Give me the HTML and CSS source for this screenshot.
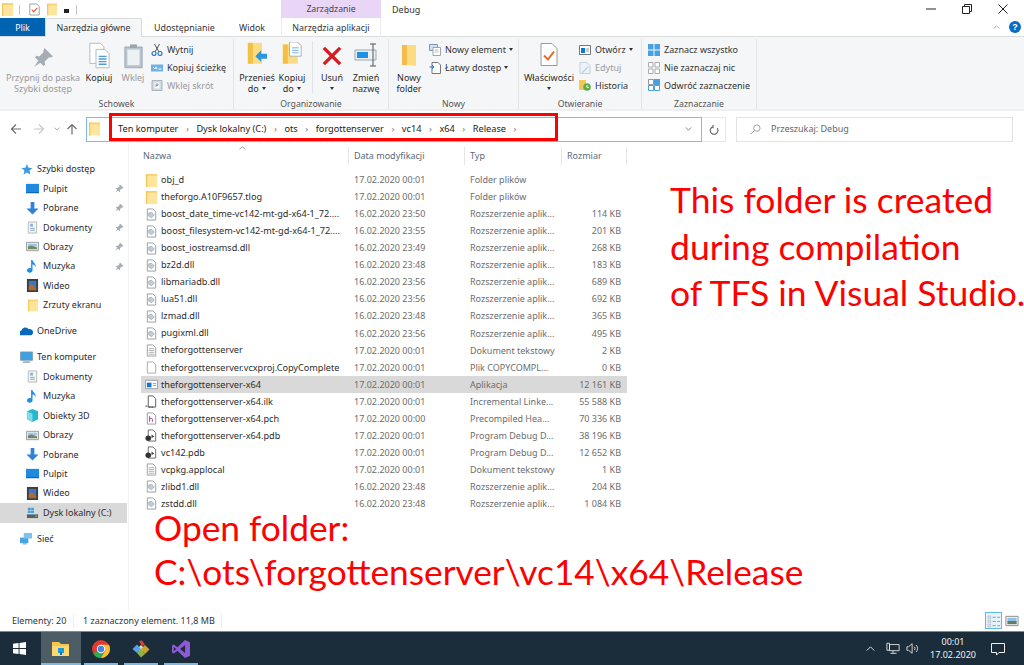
FILE: index.html
```html
<!DOCTYPE html>
<html lang="pl">
<head>
<meta charset="utf-8">
<title>Debug</title>
<link rel="stylesheet" href="styles.css">
</head>
<body>
<svg class="defs" width="0" height="0">
  <symbol id="folder" viewBox="0 0 12 14"><path d="M0 0h12v14H0z" fill="#fde59e"/><path d="M0 0h12v2H0z" fill="#f8d272"/><path d="M0 0h1.500v14H0z" fill="#f3c65e"/></symbol>
  <symbol id="dll" viewBox="0 0 14 14"><path d="M2.500 1h6L11.500 4v9h-9z" fill="#fff" stroke="#9a9a9a"/><path d="M4 5.500l3-1 3 3-3 3-3-2z" fill="#c4ccd4" stroke="#8793a0" stroke-width=".6"/></symbol>
  <symbol id="txt" viewBox="0 0 14 14"><path d="M2.500 1h6L11.500 4v9h-9z" fill="#fff" stroke="#9a9a9a"/><path d="M4 5h6M4 7h6M4 9h6M4 11h6" stroke="#9a9a9a" stroke-width=".8"/></symbol>
  <symbol id="blank" viewBox="0 0 14 14"><path d="M2.500 1h6L11.500 4v9h-9z" fill="#fff" stroke="#a8a8a8"/></symbol>
  <symbol id="app" viewBox="0 0 14 14"><path d="M.5 2.500h13v9H.5z" fill="#fff" stroke="#9a9a9a"/><path d="M2 5h5v5H2z" fill="#0a78d7"/><path d="M8.500 6h3.500M8.500 8h3.500" stroke="#999"/></symbol>
  <symbol id="ilk" viewBox="0 0 14 14"><path d="M3.500 1h5L11.500 4v9h-8z" fill="#fff" stroke="#555"/><path d="M.5 12h2M4 13h2M7 13h2" stroke="#333"/></symbol>
  <symbol id="pch" viewBox="0 0 14 14"><path d="M2.500 1h6L11.500 4v9h-9z" fill="#fff" stroke="#9a9a9a"/><path d="M5 4.500v6M5 7.500c1-1 3-1 3 .5v2.500" fill="none" stroke="#a0309a"/></symbol>
  <symbol id="pdb" viewBox="0 0 14 14"><path d="M3.500 1h5L11.500 4v9h-8z" fill="#fff" stroke="#666"/><circle cx="3.500" cy="10" r="3" fill="#333"/><path d="M7 6l3 2-3 2z" fill="#444"/></symbol>
  <symbol id="star" viewBox="0 0 14 14"><path d="M7.500 1l1.700 4 4.300.3-3.300 2.900 1 4.300-3.700-2.300L3.800 12.500l1-4.300L1.500 5.300l4.300-.3z" fill="#3f9ae0"/></symbol>
  <symbol id="desk" viewBox="0 0 14 14"><path d="M0 2h14v10H0z" fill="#1f8be0"/><path d="M0 11h14v1H0z" fill="#0f5fa8"/></symbol>
  <symbol id="down" viewBox="0 0 14 14"><path d="M5 0h4v7h4.500L7 13.500.5 7H5z" fill="#2f82d8"/></symbol>
  <symbol id="doc" viewBox="0 0 14 14"><path d="M2.500 1h9v12h-9z" fill="#f4f5f6" stroke="#b5b5b5"/><path d="M4.500 3h3v3h-3z" fill="#79b6e8"/><path d="M4.500 8h5M4.500 10h5" stroke="#8aa6bd"/></symbol>
  <symbol id="pic" viewBox="0 0 14 14"><path d="M.5 2.500h13v9H.5z" fill="#eee" stroke="#999"/><path d="M2 4h10v3H2z" fill="#9cc8ea"/><path d="M2 7l4-1 6 2v2H2z" fill="#6f8a62"/></symbol>
  <symbol id="music" viewBox="0 0 14 14"><path d="M5.500 0h1.500c.5 3 4 3.500 3.500 8C10 5.500 8.500 5 7 4.500V11a3 2.500 0 1 1-1.500-2z" fill="#1d8fe6"/></symbol>
  <symbol id="video" viewBox="0 0 14 14"><path d="M1 0h12v14H1z" fill="#3d3d3d"/><path d="M3 2h8v10H3z" fill="#3976c6"/><path d="M3 8l3-3 5 5v2H3z" fill="#b56a2c"/></symbol>
  <symbol id="cube" viewBox="0 0 14 14"><path d="M7 0l6 2.500V11l-6 3-6-3V2.500z" fill="#27b6cf"/><path d="M1 2.500L7 5v9l-6-3z" fill="#7fdbe6"/></symbol>
  <symbol id="cloud" viewBox="0 0 14 14"><path d="M0 11a3 3 0 0 1 1.500-5A4.500 4.500 0 0 1 9.500 4.500 3.500 3.500 0 0 1 14 8c0 1.500-1 3-2.500 3z" fill="#0a68bd"/></symbol>
  <symbol id="pc" viewBox="0 0 14 14"><path d="M.5 1h13v9H.5z" fill="#3aa3e3" stroke="#7d94a6" stroke-width=".8"/><path d="M3 12h8" stroke="#8fa3b3" stroke-width="1.500"/><path d="M6 10h2v2H6z" fill="#aab8c2"/></symbol>
  <symbol id="drive" viewBox="0 0 14 14"><path d="M1 9h12v4H1z" fill="#555f66"/><path d="M10 10.500h2v1h-2z" fill="#9ee06a"/><path d="M2 2h3v2.500H2zM5.500 2h3v2.500h-3zM2 5h3v2.500H2zM5.500 5h3v2.500h-3z" fill="#36a2e8"/></symbol>
  <symbol id="net" viewBox="0 0 14 14"><path d="M0 6h9v6H0z" fill="#48a3e0"/><path d="M4 1h9v6H4z" fill="#7cc3ee"/><path d="M3 12h4v1.500H3z" fill="#9ab"/></symbol>
  <symbol id="pin" viewBox="0 0 10 10"><path d="M5.500.5L9.500 4.500 8.500 5 7.500 5 5.500 7l.3 1.500-.8.500L1 5l.5-.8L3 4.500 5 2.500 5 1.500zM2.500 6.500L.5 9.500l3-2z" fill="#a5adb4"/></symbol>
  <symbol id="copybig" viewBox="0 0 24 30"><path d="M1 1h12l4 4v19H1z" fill="#fff" stroke="#a9b4bd"/><path d="M8 8h10l5 5v16H8z" fill="#fff" stroke="#a9b4bd"/><path d="M11 16h9M11 19h9M11 22h9M11 25h9" stroke="#4a9be0" stroke-width="1.500"/></symbol>
  <symbol id="clip" viewBox="0 0 22 28"><path d="M1 3h20v24H1z" fill="#b9c6d2" stroke="#94a1ad"/><path d="M4 6h14v18H4z" fill="#eef1f4"/><path d="M7 0h8v4H7z" fill="#9aa5af"/></symbol>
  <symbol id="qatcheck" viewBox="0 0 14 16"><path d="M1 1h9l3 3v11H1z" fill="#fff" stroke="#8a8a8a"/><path d="M3.500 8l2.500 3 4.500-5" fill="none" stroke="#dd5a2c" stroke-width="1.400"/></symbol>
</svg>

<header class="titlebar">
  <div class="qat">
    <svg class="q1"><use href="#folder"/></svg><i class="qsep"></i>
    <svg class="q2"><use href="#qatcheck"/></svg>
    <svg class="q3"><use href="#folder"/></svg>
    <span class="qdrop"></span><i class="qsep"></i>
  </div>
  <div class="ctx-head">Zarządzanie</div>
  <div class="wintitle">Debug</div>
  <div class="winbtns">
    <svg class="wb" viewBox="0 0 10 10"><path d="M0 5h10" stroke="#222"/></svg>
    <svg class="wb" viewBox="0 0 10 10"><path d="M.5 2.500h7v7h-7zM2.500 2.500V.5h7v7h-2" fill="none" stroke="#222"/></svg>
    <svg class="wb" viewBox="0 0 10 10"><path d="M.5.500l9 9M9.500.500l-9 9" stroke="#222"/></svg>
  </div>
</header>

<nav class="tabs">
  <div class="tab tab-file">Plik</div>
  <div class="tab tab-home">Narzędzia główne</div>
  <div class="tab tab-share">Udostępnianie</div>
  <div class="tab tab-view">Widok</div>
  <div class="tab tab-ctx">Narzędzia aplikacji</div>
  <div class="tab-tools">
    <svg class="fold-ribbon" viewBox="0 0 8 5"><path d="M.5 4.500L4 1l3.500 3.500" fill="none" stroke="#9a9a9a"/></svg>
    <div class="helpdot">?</div>
  </div>
</nav>

<section class="ribbon">
  <div class="group g-clip">
    <div class="group-body">
      <div class="big w-pin off">
        <svg class="ic-pin" viewBox="0 0 10 10"><use href="#pin"/></svg>
        <span>Przypnij do paska<br>Szybki dostęp</span>
      </div>
      <div class="big w-copy"><svg class="ic-copy"><use href="#copybig"/></svg><span>Kopiuj</span></div>
      <div class="big w-paste off"><svg class="ic-clip"><use href="#clip"/></svg><span>Wklej</span></div>
      <div class="smalls s-clip">
        <div class="small"><svg class="ic-s" viewBox="0 0 12 12"><path d="M3.500 0l4.500 8M8.500 0L4 8" stroke="#555" fill="none"/><circle cx="3" cy="9.500" r="2" fill="none" stroke="#2878c8" stroke-width="1.200"/><circle cx="9" cy="9.500" r="2" fill="none" stroke="#2878c8" stroke-width="1.200"/></svg>Wytnij</div>
        <div class="small"><svg class="ic-s" viewBox="0 0 12 12"><path d="M0 2.500h12v7H0z" fill="#6cb2e8"/><path d="M2 5l2 2 1-2 1 2M7.500 7h3" stroke="#fff" fill="none"/></svg>Kopiuj ścieżkę</div>
        <div class="small off"><svg class="ic-s" viewBox="0 0 12 12"><path d="M1 1.500h10v10H1z" fill="#c8d2db" stroke="#9aa5af"/><path d="M3.500 3.500h5v6h-5z" fill="#fff"/><path d="M5 5v3M5 5h2v1.500H5" stroke="#7a8a98" fill="none"/></svg>Wklej skrót</div>
      </div>
    </div>
    <div class="group-label">Schowek</div>
  </div>

  <div class="group g-org">
    <div class="group-body">
      <div class="big w-move">
        <svg class="ic-org" viewBox="0 0 24 30"><path d="M1 1h17v25H1z" fill="#fcdc82"/><path d="M1 1h6v25H1z" fill="#f5bf45"/><path d="M10 17l7-7v4h7v6h-7v4z" fill="#2f95e0"/></svg>
        <span>Przenieś<br>do <b class="caret"></b></span>
      </div>
      <div class="big w-copy2">
        <svg class="ic-org" viewBox="0 0 24 30"><path d="M1 3h18v23H1z" fill="#fcdc82"/><path d="M1 3h6v23H1z" fill="#f5bf45"/><path d="M9 0h9l5 4v13H9z" fill="#fff" stroke="#9aa7b2"/><path d="M12 7h8M12 10h8M12 13h8" stroke="#5ea4e0"/></svg>
        <span>Kopiuj<br>do <b class="caret"></b></span>
      </div>
      <i class="vsep"></i>
      <div class="big w-del">
        <svg class="ic-del" viewBox="0 0 22 22"><path d="M2 2l18 18M20 2L2 20" stroke="#d8191f" stroke-width="3.600"/></svg>
        <span>Usuń<br><b class="caret"></b></span>
      </div>
      <div class="big w-ren">
        <svg class="ic-ren" viewBox="0 0 24 24"><path d="M1 7h21v10H1z" fill="#eef1f3" stroke="#9aa7b2"/><path d="M3 9h11v6H3z" fill="#1e90e6"/><path d="M16 1h6M16 23h6M19 1v22" stroke="#555" fill="none"/></svg>
        <span>Zmień<br>nazwę</span>
      </div>
    </div>
    <div class="group-label">Organizowanie</div>
  </div>

  <div class="group g-new">
    <div class="group-body">
      <div class="big w-newf">
        <svg class="ic-newf" viewBox="0 0 16 24"><path d="M1 1h14v21l-8-1H1z" fill="#fcdc82"/><path d="M1 1h5v20H1z" fill="#f2bd4c"/></svg>
        <span>Nowy<br>folder</span>
      </div>
      <div class="smalls s-new">
        <div class="small"><svg class="ic-s" viewBox="0 0 12 12"><path d="M.5.500h8v6h-8z" fill="#cfe3f4" stroke="#7c99b2"/><path d="M4 3.500h7.500v8H4z" fill="#fff" stroke="#99a4ad"/><path d="M5.500 6h4M5.500 8h4" stroke="#bbb"/></svg>Nowy element <b class="caret"></b></div>
        <div class="small"><svg class="ic-s" viewBox="0 0 12 12"><path d="M3 .500h6l2.500 2.500v8.500H3z" fill="#fff" stroke="#777"/><path d="M.500 5h4M3 3l2 2-2 2" stroke="#2878c8" fill="none"/></svg>Łatwy dostęp <b class="caret"></b></div>
      </div>
    </div>
    <div class="group-label">Nowy</div>
  </div>

  <div class="group g-open">
    <div class="group-body">
      <div class="big w-prop">
        <svg class="ic-prop" viewBox="0 0 18 24"><path d="M1 1h11l5 5v17H1z" fill="#fff" stroke="#9a9a9a"/><path d="M4 13l4 4 6-8" fill="none" stroke="#e8672d" stroke-width="2"/></svg>
        <span>Właściwości<br><b class="caret"></b></span>
      </div>
      <div class="smalls s-open">
        <div class="small"><svg class="ic-s" viewBox="0 0 12 12"><path d="M.5 1.500h11v9H.5z" fill="#fff" stroke="#777"/><path d="M2 4h4v5H2z" fill="#0a78d7"/><path d="M7 5h3M7 7h3" stroke="#999"/></svg>Otwórz <b class="caret"></b></div>
        <div class="small off"><svg class="ic-s" viewBox="0 0 12 12"><path d="M1 .500h7l3 3v8H1z" fill="#eef3f8" stroke="#b8c8d8"/><path d="M3 10l6-6 1 1-6 6H3z" fill="#a8cbe8"/></svg>Edytuj</div>
        <div class="small"><svg class="ic-s" viewBox="0 0 12 12"><path d="M0 1h7v10H0z" fill="#f5c84f"/><circle cx="8" cy="8" r="3.800" fill="#5cae4a"/><path d="M8 6v2.500h2" stroke="#fff" fill="none"/></svg>Historia</div>
      </div>
    </div>
    <div class="group-label">Otwieranie</div>
  </div>

  <div class="group g-sel">
    <div class="group-body">
      <div class="smalls s-sel">
        <div class="small"><svg class="ic-s" viewBox="0 0 12 12"><path d="M0 0h5.500v5.500H0zM6.500 0H12v5.500H6.500zM0 6.500h5.500V12H0zM6.500 6.500H12V12H6.500z" fill="#4ba0e4"/></svg>Zaznacz wszystko</div>
        <div class="small"><svg class="ic-s" viewBox="0 0 12 12"><path d="M.5.500h4.500v4.500H.5zM7 .500h4.500v4.500H7zM.5 7h4.500v4.500H.5zM7 7h4.500v4.500H7z" fill="#fff" stroke="#aaa"/></svg>Nie zaznaczaj nic</div>
        <div class="small"><svg class="ic-s" viewBox="0 0 12 12"><path d="M.5 6.500h5v5h-5zM6.500 6.500h5v5h-5z" fill="#fff" stroke="#4ba0e4"/><path d="M.5.500h5v5h-5z" fill="#fff" stroke="#999"/><path d="M6 0h6v6H6z" fill="#4ba0e4"/></svg>Odwróć zaznaczenie</div>
      </div>
    </div>
    <div class="group-label">Zaznaczanie</div>
  </div>
  <div class="group-rest"></div>
</section>

<section class="addrbar">
  <svg class="nav back" viewBox="0 0 12 12"><path d="M11 6H1.500M6 1.500L1.500 6 6 10.500" fill="none" stroke="#6c6c6c" stroke-width="1.200"/></svg>
  <svg class="nav fwd" viewBox="0 0 12 12"><path d="M1 6h9.500M6 1.500L10.500 6 6 10.500" fill="none" stroke="#c8c8c8" stroke-width="1.200"/></svg>
  <svg class="nav mini" viewBox="0 0 8 5"><path d="M.5.500L4 4 7.500.500" fill="none" stroke="#8a8a8a"/></svg>
  <svg class="nav up" viewBox="0 0 12 12"><path d="M6 11.500V1.500M1.500 6L6 1.500 10.500 6" fill="none" stroke="#6c6c6c" stroke-width="1.200"/></svg>
  <div class="addr">
    <svg class="addr-ic"><use href="#folder"/></svg>
    <div class="crumbs">
      <span>Ten komputer</span><em>›</em><span>Dysk lokalny (C:)</span><em>›</em><span>ots</span><em>›</em><span>forgottenserver</span><em>›</em><span>vc14</span><em>›</em><span>x64</span><em>›</em><span>Release</span><em>›</em>
    </div>
    <svg class="addr-dd" viewBox="0 0 8 5"><path d="M.5.500L4 4 7.500.500" fill="none" stroke="#666"/></svg>
  </div>
  <div class="refresh"><svg viewBox="0 0 12 12"><path d="M9.500 3.500A4.200 4.200 0 1 1 5 2M5 0v3.500" fill="none" stroke="#666" stroke-width="1.200" transform="translate(.5 1)"/></svg></div>
  <div class="search">
    <svg viewBox="0 0 12 12"><circle cx="7.500" cy="4.500" r="3.500" fill="none" stroke="#999"/><path d="M5 7l-4 4" stroke="#999"/></svg>
    <span>Przeszukaj: Debug</span>
  </div>
</section>

<main class="main">
  <aside class="side">
    <div class="sgroup">
      <div class="si top"><svg><use href="#star"/></svg>Szybki dostęp</div>
      <div class="si"><svg><use href="#desk"/></svg>Pulpit<svg class="spin"><use href="#pin"/></svg></div>
      <div class="si"><svg><use href="#down"/></svg>Pobrane<svg class="spin"><use href="#pin"/></svg></div>
      <div class="si"><svg><use href="#doc"/></svg>Dokumenty<svg class="spin"><use href="#pin"/></svg></div>
      <div class="si"><svg><use href="#pic"/></svg>Obrazy<svg class="spin"><use href="#pin"/></svg></div>
      <div class="si"><svg><use href="#music"/></svg>Muzyka<svg class="spin"><use href="#pin"/></svg></div>
      <div class="si"><svg><use href="#video"/></svg>Wideo</div>
      <div class="si"><svg class="si-folder"><use href="#folder"/></svg>Zrzuty ekranu</div>
    </div>
    <div class="sgroup">
      <div class="si top"><svg><use href="#cloud"/></svg>OneDrive</div>
    </div>
    <div class="sgroup">
      <div class="si top"><svg><use href="#pc"/></svg>Ten komputer</div>
      <div class="si"><svg><use href="#doc"/></svg>Dokumenty</div>
      <div class="si"><svg><use href="#music"/></svg>Muzyka</div>
      <div class="si"><svg><use href="#cube"/></svg>Obiekty 3D</div>
      <div class="si"><svg><use href="#pic"/></svg>Obrazy</div>
      <div class="si"><svg><use href="#down"/></svg>Pobrane</div>
      <div class="si"><svg><use href="#desk"/></svg>Pulpit</div>
      <div class="si"><svg><use href="#video"/></svg>Wideo</div>
      <div class="si sel"><svg><use href="#drive"/></svg>Dysk lokalny (C:)</div>
    </div>
    <div class="sgroup">
      <div class="si top"><svg><use href="#net"/></svg>Sieć</div>
    </div>
  </aside>

  <div class="files">
    <div class="fhead">
      <div>Nazwa</div><div>Data modyfikacji</div><div>Typ</div><div>Rozmiar</div>
    </div>
    <svg class="sortmark" viewBox="0 0 8 4"><path d="M.5 3.500L4 .500l3.500 3" fill="none" stroke="#999"/></svg>
    <div class="frow"><div class="fn"><svg><use href="#folder"/></svg>obj_d</div><div>17.02.2020 00:01</div><div>Folder plików</div><div class="sz"></div></div>
    <div class="frow"><div class="fn"><svg><use href="#folder"/></svg>theforgo.A10F9657.tlog</div><div>17.02.2020 00:01</div><div>Folder plików</div><div class="sz"></div></div>
    <div class="frow"><div class="fn"><svg><use href="#dll"/></svg>boost_date_time-vc142-mt-gd-x64-1_72....</div><div>16.02.2020 23:50</div><div>Rozszerzenie aplik...</div><div class="sz">114 KB</div></div>
    <div class="frow"><div class="fn"><svg><use href="#dll"/></svg>boost_filesystem-vc142-mt-gd-x64-1_72....</div><div>16.02.2020 23:55</div><div>Rozszerzenie aplik...</div><div class="sz">201 KB</div></div>
    <div class="frow"><div class="fn"><svg><use href="#dll"/></svg>boost_iostreamsd.dll</div><div>16.02.2020 23:49</div><div>Rozszerzenie aplik...</div><div class="sz">268 KB</div></div>
    <div class="frow"><div class="fn"><svg><use href="#dll"/></svg>bz2d.dll</div><div>16.02.2020 23:48</div><div>Rozszerzenie aplik...</div><div class="sz">183 KB</div></div>
    <div class="frow"><div class="fn"><svg><use href="#dll"/></svg>libmariadb.dll</div><div>16.02.2020 23:56</div><div>Rozszerzenie aplik...</div><div class="sz">689 KB</div></div>
    <div class="frow"><div class="fn"><svg><use href="#dll"/></svg>lua51.dll</div><div>16.02.2020 23:56</div><div>Rozszerzenie aplik...</div><div class="sz">692 KB</div></div>
    <div class="frow"><div class="fn"><svg><use href="#dll"/></svg>lzmad.dll</div><div>16.02.2020 23:48</div><div>Rozszerzenie aplik...</div><div class="sz">365 KB</div></div>
    <div class="frow"><div class="fn"><svg><use href="#dll"/></svg>pugixml.dll</div><div>16.02.2020 23:56</div><div>Rozszerzenie aplik...</div><div class="sz">495 KB</div></div>
    <div class="frow"><div class="fn"><svg><use href="#txt"/></svg>theforgottenserver</div><div>17.02.2020 00:01</div><div>Dokument tekstowy</div><div class="sz">2 KB</div></div>
    <div class="frow"><div class="fn"><svg><use href="#blank"/></svg>theforgottenserver.vcxproj.CopyComplete</div><div>17.02.2020 00:01</div><div>Plik COPYCOMPL...</div><div class="sz">0 KB</div></div>
    <div class="frow selected"><div class="fn"><svg><use href="#app"/></svg>theforgottenserver-x64</div><div>17.02.2020 00:01</div><div>Aplikacja</div><div class="sz">12 161 KB</div></div>
    <div class="frow"><div class="fn"><svg><use href="#ilk"/></svg>theforgottenserver-x64.ilk</div><div>17.02.2020 00:01</div><div>Incremental Linke...</div><div class="sz">55 588 KB</div></div>
    <div class="frow"><div class="fn"><svg><use href="#pch"/></svg>theforgottenserver-x64.pch</div><div>17.02.2020 00:00</div><div>Precompiled Hea...</div><div class="sz">70 336 KB</div></div>
    <div class="frow"><div class="fn"><svg><use href="#pdb"/></svg>theforgottenserver-x64.pdb</div><div>17.02.2020 00:01</div><div>Program Debug D...</div><div class="sz">38 196 KB</div></div>
    <div class="frow"><div class="fn"><svg><use href="#pdb"/></svg>vc142.pdb</div><div>17.02.2020 00:01</div><div>Program Debug D...</div><div class="sz">12 652 KB</div></div>
    <div class="frow"><div class="fn"><svg><use href="#txt"/></svg>vcpkg.applocal</div><div>17.02.2020 00:01</div><div>Dokument tekstowy</div><div class="sz">1 KB</div></div>
    <div class="frow"><div class="fn"><svg><use href="#dll"/></svg>zlibd1.dll</div><div>16.02.2020 23:48</div><div>Rozszerzenie aplik...</div><div class="sz">204 KB</div></div>
    <div class="frow"><div class="fn"><svg><use href="#dll"/></svg>zstdd.dll</div><div>16.02.2020 23:48</div><div>Rozszerzenie aplik...</div><div class="sz">1 084 KB</div></div>
  </div>
</main>

<footer class="status">
  <span class="st1">Elementy: 20</span>
  <span class="st2">1 zaznaczony element. 11,8 MB</span>
  <div class="views">
    <div class="vbtn on"><svg viewBox="0 0 15 15"><path d="M1 2h3v3H1zM1 6.500h3v3H1zM1 11h3v3H1z" fill="#d7e3ec" stroke="#aab"  stroke-width=".5"/><path d="M6 3.500h3.500M11 3.500h3M6 8h3.500M11 8h3M6 12.500h3.500M11 12.500h3" stroke="#8b97a1"/></svg></div>
    <div class="vbtn"><svg viewBox="0 0 15 15"><path d="M1 2.500h13v10H1z" fill="#fff" stroke="#888"/><path d="M2.500 4h10v3.500h-10z" fill="#8fc2e8"/><path d="M2.500 7.500h10v3.500h-10z" fill="#5f8060"/></svg></div>
  </div>
</footer>

<footer class="taskbar">
  <div class="tb tb-start"><svg viewBox="0 0 14 14"><path d="M0 2l6-.9V6.500H0zM7 1l7-1v6.500H7zM0 7.500h6v5.400l-6-.9zM7 7.500h7V14l-7-1z" fill="#fff"/></svg></div>
  <div class="tb tb-open active"><svg viewBox="0 0 18 16"><path d="M0 1h7l2 2h8v12H0z" fill="#f6c54c"/><path d="M0 5h17v10H0z" fill="#fbd96f"/><path d="M6 7h6v5H6z" fill="#1d9be0"/><path d="M8 11h2v3H8z" fill="#0f6fb0"/></svg></div>
  <div class="tb tb-open"><svg viewBox="0 0 18 18"><circle cx="9" cy="9" r="9" fill="#e33b2e"/><path d="M9 9L1.200 13.500A9 9 0 0 0 9 18c1 0 2-.2 3-.5z" fill="#2da94f"/><path d="M9 4.800h7.900A9 9 0 0 1 9 18l4-7z" fill="#fbc02d"/><circle cx="9" cy="9" r="4.200" fill="#fff"/><circle cx="9" cy="9" r="3.200" fill="#3f87e8"/></svg></div>
  <div class="tb tb-open"><svg viewBox="0 0 18 18"><path d="M5 9l4-4 4 4-4 4z" fill="#e9e0b0"/><path d="M.5 9l4.500-4.500L9 9l-4 4z" fill="#5aa3ea"/><path d="M9 9l4-4 4.500 4.500L13 14z" fill="#c8a52f"/><path d="M5 13l4-4 4 5-4 3.500z" fill="#8fb04a"/><path d="M7 1l3-.5L13 5l-3 1z" fill="#d8443c"/></svg></div>
  <div class="tb tb-open"><svg viewBox="0 0 20 20"><path d="M14.500 0L20 2.500v15L14.500 20 6 12l-4 3-2-1V6l2-1 4 3zM14.500 5.500L9 10l5.500 4.500zM2 7.500v5l2.500-2.500z" fill="#8f5ad6"/></svg></div>
  <div class="tray">
    <svg class="tr-ch" viewBox="0 0 10 6"><path d="M.5 5.500L5 1l4.500 4.500" fill="none" stroke="#fff"/></svg>
    <svg class="tr-net" viewBox="0 0 16 14"><path d="M1 1h3v8H1zM4 2.500h11v7H4zM8 9.500v3M5 12.500h7" fill="none" stroke="#e6e6e6"/></svg>
    <svg class="tr-vol" viewBox="0 0 16 14"><path d="M1 5h2l4-3.500v11L3 9H1z" fill="none" stroke="#e6e6e6"/><path d="M9.500 5a3 3 0 0 1 0 4M11.500 3a6 6 0 0 1 0 8" fill="none" stroke="#e6e6e6"/></svg>
    <div class="clock"><span>00:01</span><span>17.02.2020</span></div>
    <svg class="tr-note" viewBox="0 0 14 14"><path d="M.5 1.500h13v9H8L5.500 13v-2.500h-5z" fill="none" stroke="#f0f0f0"/></svg>
  </div>
</footer>

<div class="redbox"></div>
<div class="note note-top">This folder is created<br>during compilation<br>of TFS in Visual Studio.</div>
<div class="note note-bottom">Open folder:<br>C:\ots\forgottenserver\vc14\x64\Release</div>
</body>
</html>
```
FILE: styles.css
```css
* { box-sizing: border-box; }
html, body { margin: 0; padding: 0; }
body {
  width: 1024px; height: 665px; overflow: hidden; position: relative;
  display: flex; flex-direction: column; background: #fff;
  font-family: "Noto Sans", sans-serif; font-size: 9px; color: #2c2c2c; line-height: 1.1;
}
svg { display: block; flex: none; }
.defs { position: absolute; }

/* title bar */
.titlebar { height: 18px; display: flex; flex: none; align-items: stretch; }
.qat { width: 281px; display: flex; align-items: center; gap: 0; padding-top: 1px; }
.q1 { width: 11px; height: 13px; margin-left: 2px; }
.q2 { width: 11px; height: 13px; margin-left: 9px; }
.q3 { width: 10px; height: 13px; margin-left: 7px; }
.qsep { width: 1px; height: 10px; background: #c4c4c4; margin-left: 6px; }
.qdrop { width: 5px; height: 4px; margin-left: 7px; border-top: 1px solid #222; border-bottom: 3px solid #222; margin-right: 3px; margin-top: 2px; }
.qat .qsep:last-child { margin-left: 4px; }
.ctx-head { width: 100px; background: #e9d6f6; text-align: center; padding-top: 5px; font-size: 8.700px; color: #444; }
.wintitle { padding: 5px 0 0 11px; flex: 1; color: #333; font-size: 9px; }
.winbtns { display: flex; gap: 26px; padding: 4px 16px 0 0; }
.wb { width: 10px; height: 10px; }

/* tabs */
.tabs { height: 19px; flex: none; display: flex; position: relative; border-bottom: 1px solid #dadbdc; }
.tab { font-size: 8.900px; padding-top: 5px; color: #333; }
.tab-file { width: 45px; background: #0063b1; color: #fff; text-align: center; }
.tab-home { width: 97px; text-align: center; background: #f5f6f7; border: 1px solid #dadbdc; border-bottom: 0; height: 19px; padding-top: 4px; }
.tab-share { margin-left: 12px; width: 85px; }
.tab-view { width: 42px; }
.tab-ctx { width: 100px; text-align: center; height: 19px; border-right: 1px solid #eee; border-left: 1px solid #eee; }
.tab-tools { margin-left: auto; width: 50px; height: 18px; display: flex; justify-content: flex-end; align-items: center; gap: 9px; padding-right: 3px; }
.fold-ribbon { width: 7px; height: 4px; }
.helpdot { flex: none; width: 12px; height: 12px; border-radius: 50%; background: #0a6cc4; color: #fff; font: bold 9px/12px "Liberation Sans", sans-serif; text-align: center; }

/* ribbon */
.ribbon { height: 74px; flex: none; display: flex; background: #f5f6f7; border-bottom: 2px solid #efefef; padding-top: 2px; }
.group { display: flex; flex-direction: column; border-right: 1px solid #e2e3e4; height: 70px; flex: none; }
.group-body { flex: 1; display: flex; align-items: flex-start; padding-top: 2px; }
.group-label { text-align: center; color: #555; height: 12.500px; line-height: 15px; font-size: 8.700px; }
.group-rest { flex: 1; }
.g-clip { width: 234px; }
.g-org { width: 155px; }
.g-new { width: 130px; }
.g-open { width: 123px; }
.g-sel { width: 115px; }
.big { display: flex; flex-direction: column; align-items: center; text-align: center; line-height: 10.500px; height: 52px; margin-top: 1px; }
.big > span { margin-top: auto; min-height: 21px; white-space: nowrap; }
.off { color: #9a9a9a; }
.off .ic-s { opacity: .8; }
.caret { display: inline-block; width: 0; height: 0; border: 2.500px solid transparent; border-top: 3px solid #333; border-bottom: 0; vertical-align: 1.500px; margin-left: 1px; }
.w-pin { width: 74px; margin-left: 6px; }
.ic-pin { width: 21px; height: 21px; margin-top: 5px; }
.w-copy { width: 28px; margin-left: 5px; }
.ic-copy { width: 21px; height: 27px; }
.w-paste { width: 24px; margin-left: 8px; }
.ic-clip { width: 19px; height: 25px; margin-top: 2px; }
.smalls { display: flex; flex-direction: column; gap: 0; }
.small { height: 17.800px; display: flex; align-items: center; gap: 4px; white-space: nowrap; color: #333; }
.small .caret { margin-left: -1px; }
.small.off { color: #9a9a9a; }
.ic-s { width: 12px; height: 12px; }
.s-clip { margin-left: 6px; }
.w-move { width: 36px; margin-left: 5px; }
.w-copy2 { width: 34px; margin-left: 0; }
.ic-org { width: 20px; height: 25px; }
.vsep { width: 1px; height: 52px; background: #e2e3e4; margin-left: 3px; }
.w-del { width: 30px; margin-left: 4px; }
.ic-del { width: 20px; height: 20px; margin-top: 4px; }
.w-ren { width: 34px; margin-left: 2px; }
.ic-ren { width: 24px; height: 24px; margin-top: 1px; }
.w-newf { width: 36px; margin-left: 2px; }
.ic-newf { width: 16px; height: 24px; margin-top: 2px; }
.s-new { margin-left: 2px; }
.w-prop { width: 52px; margin-left: 4px; }
.ic-prop { width: 18px; height: 25px; margin-top: 0; }
.s-open { margin-left: 4px; }
.s-sel { margin-left: 6px; }

/* address bar */
.addrbar { height: 34px; flex: none; display: flex; align-items: center; padding: 2px 0 0 0; }
.nav { flex: none; }
.back { width: 12px; height: 12px; margin-left: 10px; }
.fwd { width: 12px; height: 12px; margin-left: 11px; }
.mini { width: 6px; height: 4px; margin-left: 9px; }
.up { width: 12px; height: 12px; margin-left: 6px; }
.addr { width: 616px; height: 25px; margin-left: 8px; border: 1px solid #7ebbee; display: flex; align-items: center; background: #fff; }
.addr-ic { width: 11px; height: 14px; margin-left: 2px; }
.crumbs { display: flex; align-items: center; flex: 1; margin-left: 18px; color: #222; font-size: 9.200px; }
.crumbs em { font-style: normal; color: #777; width: 18px; text-align: center; }
.addr-dd { width: 7px; height: 4px; margin-right: 9px; }
.refresh { width: 24px; height: 25px; border: 1px solid #e8e8e8; border-left: 0; display: flex; align-items: center; justify-content: center; }
.refresh svg { width: 11px; height: 11px; }
.search { width: 277px; height: 25px; margin-left: 10px; border: 1px solid #e3e3e3; display: flex; align-items: center; color: #666; }
.search svg { width: 11px; height: 11px; margin-left: 13px; margin-right: 10px; }

/* main */
.main { height: 465px; flex: none; display: flex; }
.side { width: 129px; flex: none; border-right: 1px solid #f1f1f1; padding-top: 14.500px; }
.sgroup { margin-bottom: 6.600px; }
.si { height: 19.450px; display: flex; align-items: center; padding-left: 26px; width: 127px; white-space: nowrap; position: relative; color: #2c2c2c; }
.si > svg:first-child { width: 13px; height: 13px; margin-right: 4px; }
.si > svg.si-folder { width: 10px; margin-right: 5px; margin-left: 2px; }
.si.top { padding-left: 20px; }
.si.sel { background: #d9d9d9; }
.spin { position: absolute; left: 115px; width: 9px; height: 9px; top: 5px; }
.files { flex: 1; position: relative; padding: 2px 0 0 12px; }
.fhead, .frow { display: grid; grid-template-columns: 208px 116px 97px 65px; width: 486px; }
.fhead { height: 18px; margin-bottom: 6.500px; color: #5a6a7a; align-items: center; }
.fhead > div { padding-left: 2px; height: 18px; line-height: 18px; border-right: 1px solid #e5e5e5; }
.fhead > div + div { padding-left: 5px; }
.sortmark { position: absolute; left: 110px; top: 1px; width: 7px; height: 4px; }
.frow { height: 17.050px; align-items: center; color: #6d6d6d; white-space: nowrap; }
.frow > div { padding-left: 5px; }
.frow > .fn { display: flex; align-items: center; color: #2c2c2c; padding-left: 4px; font-size: 9.130px; }
.fn svg { width: 13px; height: 13px; margin-right: 3px; }
.frow > .sz { text-align: right; padding-right: 6px; }
.frow.selected { background: #d9d9d9; }

/* status */
.status { height: 22px; flex: none; display: flex; align-items: center; color: #333; padding-left: 12px; border-bottom: 1px solid #888; position: relative; }
.st1 { width: 62px; height: 14px; line-height: 14px; border-right: 1px solid #eee; }
.st2 { margin-left: 9px; width: 139px; height: 14px; line-height: 14px; border-right: 1px solid #eee; }
.views { margin-left: auto; display: flex; gap: 1px; padding-right: 4px; }
.vbtn { width: 17px; height: 17px; display: flex; align-items: center; justify-content: center; border: 1px solid transparent; }
.vbtn.on { border-color: #5cbbe8; background: #e5f3fb; }
.vbtn svg { width: 14px; height: 14px; }

/* taskbar */
.taskbar { height: 33px; flex: none; background: #1b2d3a; display: flex; align-items: stretch; color: #f0f0f0; }
.tb { width: 40px; display: flex; align-items: center; justify-content: center; position: relative; }
.tb svg { width: 18px; height: 18px; }
.tb-start { width: 41px; justify-content: flex-start; padding-left: 13px; }
.tb-start svg { width: 13px; height: 13px; }
.tb-open::after { content: ""; position: absolute; left: 3px; right: 3px; bottom: 0; height: 2px; background: #7fb8dc; }
.active { background: #4d5d66; }
.active::after { left: 0; right: 0; }
.tray { margin-left: auto; display: flex; align-items: center; }
.tr-ch { width: 9px; height: 5px; margin-right: 11px; }
.tr-net { width: 14px; height: 13px; margin-right: 6px; }
.tr-vol { width: 14px; height: 13px; }
.clock { width: 52px; margin-left: 7px; display: flex; flex-direction: column; align-items: center; gap: 3px; color: #f0f0f0; font-size: 9px; }
.tr-note { width: 14px; height: 14px; margin: 0 19px 0 12px; }

/* annotations */
.redbox { position: absolute; left: 109px; top: 113px; width: 449px; height: 28px; border: 3px solid #f00; }
.note { position: absolute; color: #f00; font-family: Lato, sans-serif; white-space: nowrap; }
.note-top { left: 670px; top: 177px; font-size: 35.500px; line-height: 46.500px; }
.note-bottom { left: 154px; top: 506px; font-size: 35.300px; line-height: 44px; }
```
